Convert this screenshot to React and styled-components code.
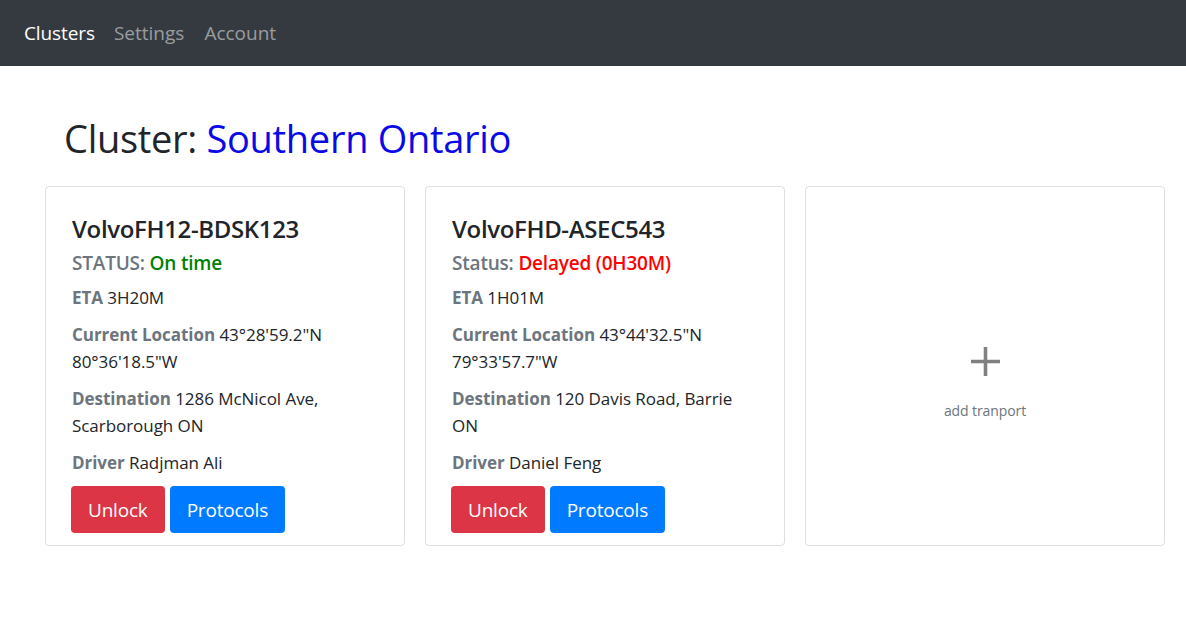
import React from 'react';
import styled, { createGlobalStyle } from 'styled-components';

const GlobalStyle = createGlobalStyle`
  body {
    margin: 0;
    background: #fff;
    font-family: 'Open Sans', 'Noto Sans', sans-serif;
    color: #212529;
  }
`;

const NavBar = styled.nav`
  height: 66px;
  background: #343a40;
  display: flex;
  align-items: center;
  padding: 0 14px;
  box-sizing: border-box;
`;

const NavLink = styled.a`
  font-size: 19px;
  padding: 0 ${(p) => (p.active ? '9px' : '10px')} 0 10px;
  color: ${(p) => (p.active ? '#fff' : 'rgba(255,255,255,0.5)')};
  text-decoration: none;
  letter-spacing: ${(p) => (p.active ? '-0.1px' : '0')};
`;

const Main = styled.main`
  padding: 0 45px;
`;

const Heading = styled.h1`
  margin: 0;
  padding: 48px 0 0 19px;
  height: 120px;
  box-sizing: border-box;
  font-size: 38px;
  font-weight: 400;
  line-height: 48px;
  letter-spacing: -0.3px;
`;

const Place = styled.span`
  color: #0a0ae6;
`;

const Grid = styled.div`
  display: grid;
  grid-template-columns: repeat(3, 360px);
  gap: 20px;
`;

const Card = styled.div`
  height: 360px;
  box-sizing: border-box;
  border: 1px solid rgba(0, 0, 0, 0.125);
  border-radius: 4px;
  padding: 27px 26px 12px 26px;
  display: flex;
  flex-direction: column;
`;

const AddCard = styled(Card)`
  align-items: center;
  justify-content: center;
  color: #6c757d;
  padding: 35px 0 0;
  cursor: pointer;
`;

const AddLabel = styled.div`
  font-size: 14px;
  margin-top: 25px;
  letter-spacing: -0.1px;
`;

const Title = styled.h4`
  margin: 0 0 7px;
  font-size: 24px;
  font-weight: 600;
  line-height: 30px;
  letter-spacing: -0.35px;
`;

const Status = styled.h5`
  margin: 0 0 9px;
  font-size: 19px;
  font-weight: 600;
  line-height: 24px;
  color: #6c757d;
  letter-spacing: -0.2px;
`;

const StatusValue = styled.span`
  color: ${(p) => p.color};
`;

const Line = styled.p`
  margin: 0 0 10px;
  font-size: 17px;
  line-height: 27px;
  letter-spacing: -0.05px;
`;

const Label = styled.b`
  color: #6c757d;
  font-weight: 700;
`;

const Buttons = styled.div`
  display: flex;
  gap: 5px;
  margin: 0 0 0 -1px;
`;

const Button = styled.button`
  height: 47px;
  padding: 0 17px;
  border: none;
  border-radius: 4px;
  font-family: inherit;
  font-size: 19px;
  letter-spacing: -0.2px;
  color: #fff;
  background: ${(p) => p.bg};
  cursor: pointer;
`;

const trucks = [
  {
    id: 1,
    name: 'VolvoFH12-BDSK123',
    statusLabel: 'STATUS:',
    status: 'On time',
    statusColor: '#008000',
    eta: '3H20M',
    location: ['43°28\'59.2"N', '80°36\'18.5"W'],
    destination: ['1286 McNicol Ave,', 'Scarborough ON'],
    driver: 'Radjman Ali',
  },
  {
    id: 2,
    name: 'VolvoFHD-ASEC543',
    statusLabel: 'Status:',
    status: 'Delayed (0H30M)',
    statusColor: '#ff0000',
    eta: '1H01M',
    location: ['43°44\'32.5"N', '79°33\'57.7"W'],
    destination: ['120 Davis Road, Barrie', 'ON'],
    driver: 'Daniel Feng',
  },
];

function PlusIcon() {
  return (
    <svg width="29" height="29" viewBox="0 0 29 29">
      <path d="M14.5 0V29M0 14.5H29" stroke="#808080" strokeWidth="3.6" fill="none" />
    </svg>
  );
}

function App() {
  return (
    <>
      <GlobalStyle />
      <NavBar>
        <NavLink active href="#">Clusters</NavLink>
        <NavLink href="#">Settings</NavLink>
        <NavLink href="#">Account</NavLink>
      </NavBar>
      <Main>
        <Heading>
          Cluster: <Place>Southern Ontario</Place>
        </Heading>
        <Grid>
          {trucks.map((t) => (
            <Card key={t.id}>
              <Title>{t.name}</Title>
              <Status>
                {t.statusLabel} <StatusValue color={t.statusColor}>{t.status}</StatusValue>
              </Status>
              <Line>
                <Label>ETA</Label> {t.eta}
              </Line>
              <Line>
                <Label>Current Location</Label> {t.location[0]}
                <br />
                {t.location[1]}
              </Line>
              <Line>
                <Label>Destination</Label> {t.destination[0]}
                <br />
                {t.destination[1]}
              </Line>
              <Line>
                <Label>Driver</Label> {t.driver}
              </Line>
              <Buttons>
                <Button bg="#dc3545">Unlock</Button>
                <Button bg="#007bff">Protocols</Button>
              </Buttons>
            </Card>
          ))}
          <AddCard>
            <PlusIcon />
            <AddLabel>add tranport</AddLabel>
          </AddCard>
        </Grid>
      </Main>
    </>
  );
}

export default App;
